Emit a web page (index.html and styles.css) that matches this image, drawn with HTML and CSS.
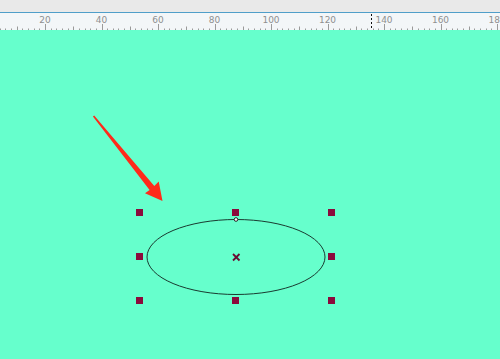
FILE: index.html
```html
<!DOCTYPE html>
<html>
<head>
<meta charset="utf-8">
<link rel="stylesheet" href="styles.css">
</head>
<body>
<div class="app">
  <div class="topbar"></div>
  <div class="ruler">
    <svg width="500" height="17" viewBox="0 0 500 17" xmlns="http://www.w3.org/2000/svg">
      <g id="ticks" stroke="#9a9a9a" stroke-width="1"></g>
      <g class="labels" fill="#8f8f8f" font-family="DejaVu Sans, Verdana, sans-serif" font-size="9" text-anchor="middle">
        <text x="45" y="10">20</text>
        <text x="101.5" y="10">40</text>
        <text x="158" y="10">60</text>
        <text x="214.5" y="10">80</text>
        <text x="271" y="10">100</text>
        <text x="327.5" y="10">120</text>
        <text x="384" y="10">140</text>
        <text x="440.5" y="10">160</text>
        <text x="497" y="10">180</text>
      </g>
      <line x1="371.5" y1="1" x2="371.5" y2="17" stroke="#111" stroke-width="1" stroke-dasharray="2,2"/>
    </svg>
  </div>
  <div class="canvas">
    <svg width="500" height="329" viewBox="0 30 500 329" xmlns="http://www.w3.org/2000/svg">
      <polygon points="94.2,115.6 92.9,116.6 149.6,190 145,193.2 162.5,201 158.7,181.4 154.3,186" fill="#ff2a1a"/>
      <ellipse cx="236" cy="257" rx="89" ry="37.5" fill="none" stroke="#1a3a30" stroke-width="1"/>
      <circle cx="236" cy="219.5" r="1.8" fill="#fff" stroke="#222" stroke-width="1"/>
      <g fill="#8b0a3c">
        <rect x="136" y="209" width="7" height="7"/>
        <rect x="232" y="209" width="7" height="7"/>
        <rect x="328" y="209" width="7" height="7"/>
        <rect x="136" y="253" width="7" height="7"/>
        <rect x="328" y="253" width="7" height="7"/>
        <rect x="136" y="297" width="7" height="7"/>
        <rect x="232" y="297" width="7" height="7"/>
        <rect x="328" y="297" width="7" height="7"/>
      </g>
      <g stroke="#6a0a30" stroke-width="1.8">
        <line x1="233" y1="254" x2="239.5" y2="260.5"/>
        <line x1="239.5" y1="254" x2="233" y2="260.5"/>
      </g>
    </svg>
  </div>
</div>
<script src="ruler.js"></script>
</body>
</html>
```

FILE: ruler.js
```js
(function () {
  var g = document.getElementById('ticks');
  var ns = 'http://www.w3.org/2000/svg';
  var unit = 2.825;
  var zero = -11.5;
  for (var u = 0; u <= 190; u += 2) {
    var x = Math.round(zero + u * unit) + 0.5;
    if (x < 0 || x > 500) continue;
    var top = 15.5;
    if (u % 20 === 0) top = 11;
    else if (u % 10 === 0) top = 13.5;
    var l = document.createElementNS(ns, 'line');
    l.setAttribute('x1', x);
    l.setAttribute('x2', x);
    l.setAttribute('y1', top);
    l.setAttribute('y2', 17);
    g.appendChild(l);
  }
})();
```

FILE: styles.css
```css
html, body {
  margin: 0;
  padding: 0;
  background: #66ffcc;
  overflow: hidden;
}
.app {
  width: 500px;
  height: 359px;
  display: flex;
  flex-direction: column;
}
.topbar {
  height: 12px;
  background: #e9e9e9;
  border-bottom: 1px solid #4f9ec9;
}
.ruler {
  height: 17px;
  background: #f3f6f8;
}
.ruler svg, .canvas svg {
  display: block;
}
.canvas {
  flex: 1;
  background: #66ffcc;
}
```
